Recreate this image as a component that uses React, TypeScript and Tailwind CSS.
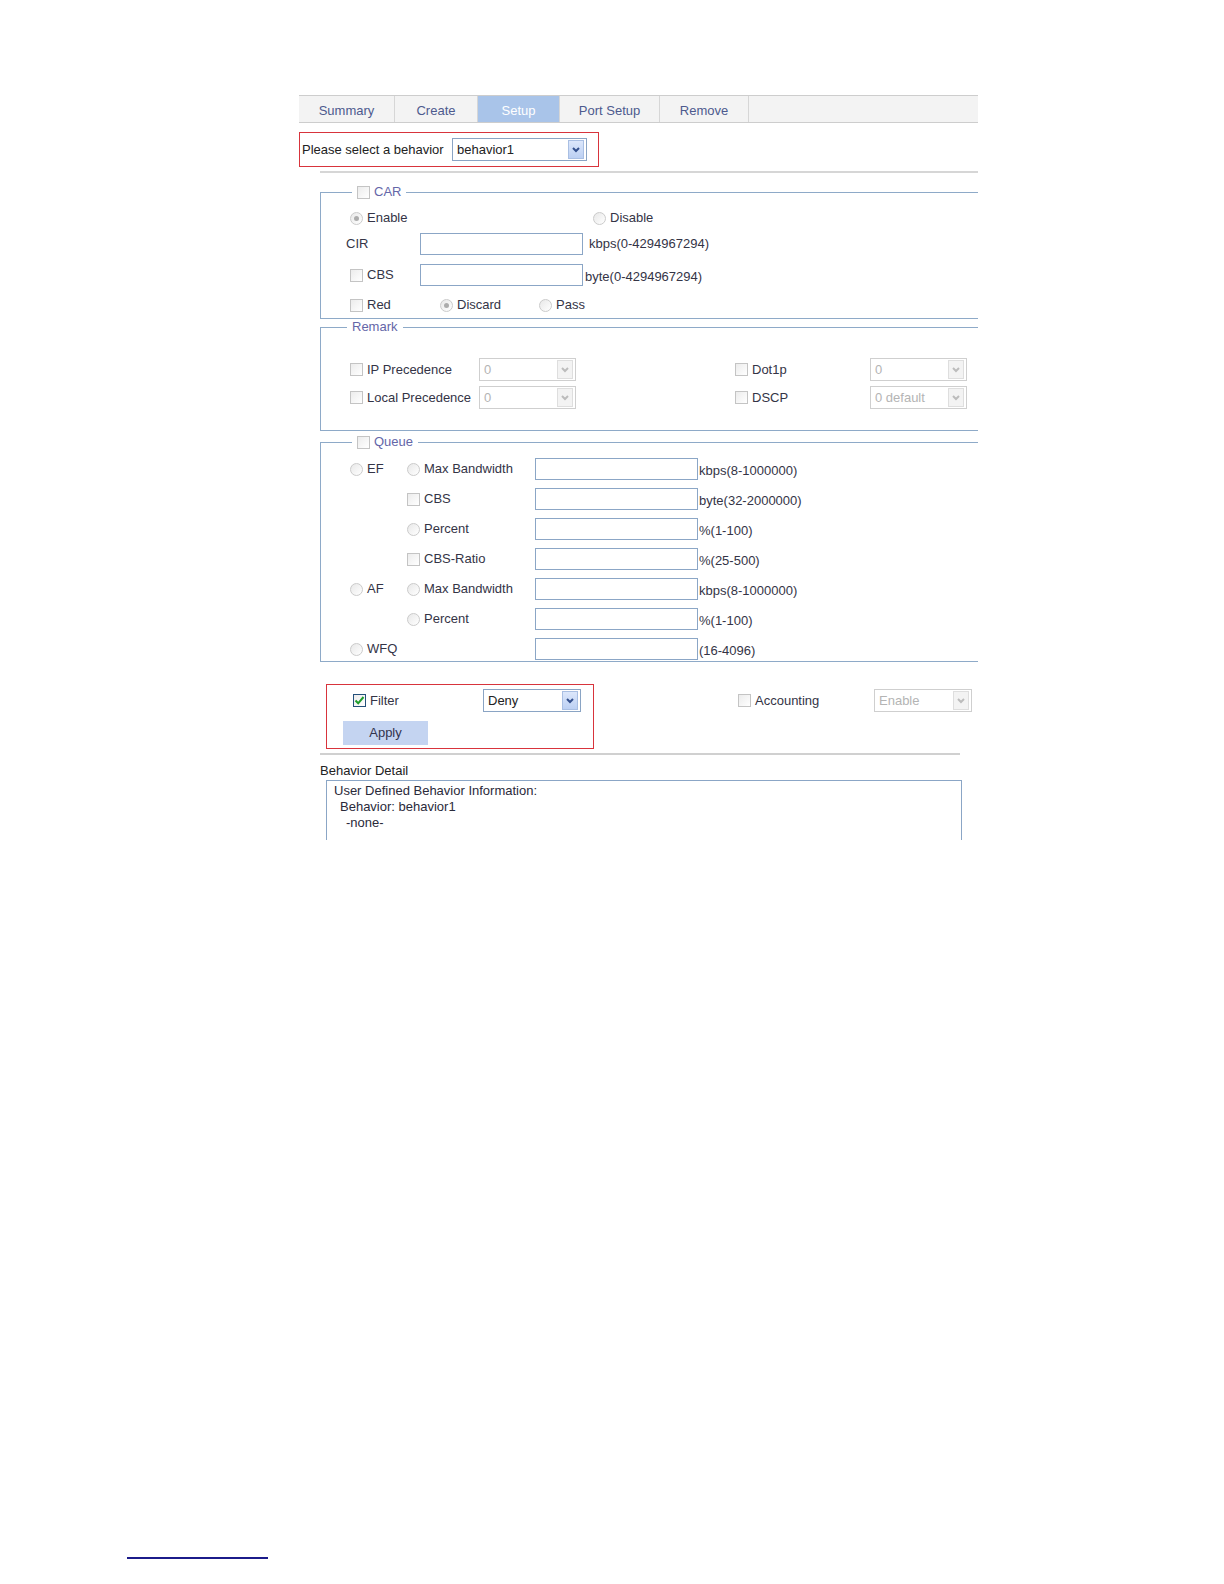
import React from 'react';

function Check({ checked = false }: { checked?: boolean }) {
  return (
    <span
      className={`inline-flex h-[13px] w-[13px] shrink-0 items-center justify-center border bg-gradient-to-br from-[#ececec] to-white ${
        checked ? 'border-[#24507a]' : 'border-[#c4c4c4]'
      }`}
    >
      {checked && (
        <svg width="11" height="11" viewBox="0 0 11 11">
          <path d="M1.5 5.5 L4.2 8.3 L9.5 2" fill="none" stroke="#1f9d2b" strokeWidth="2" />
        </svg>
      )}
    </span>
  );
}

function Radio({ checked = false }: { checked?: boolean }) {
  return (
    <span className="inline-flex h-[13px] w-[13px] shrink-0 items-center justify-center rounded-full border border-[#cbcbcb] bg-gradient-to-br from-[#e8e8e8] to-white">
      {checked && <span className="h-[5px] w-[5px] rounded-full bg-[#acacac]" />}
    </span>
  );
}

function Chevron({ color }: { color: string }) {
  return (
    <svg width="8" height="6" viewBox="0 0 8 6">
      <path d="M1 1 L4 4 L7 1" fill="none" stroke={color} strokeWidth="2" />
    </svg>
  );
}

function Select({ value, className, disabled = false }: { value: string; className: string; disabled?: boolean }) {
  return (
    <div
      className={`flex h-[23px] shrink-0 items-center justify-between border bg-white pl-[4px] pr-[2px] ${
        disabled ? 'border-[#cfcfcf] text-[#b4b4b4]' : 'border-[#8aa4c4] text-[#222]'
      } ${className}`}
    >
      <span className="leading-[16px]">{value}</span>
      {disabled ? (
        <span className="flex h-[19px] w-[16px] items-center justify-center border border-[#dedede] bg-[#f3f3f3]">
          <Chevron color="#bcbcbc" />
        </span>
      ) : (
        <span className="flex h-[19px] w-[16px] items-center justify-center border border-[#a9bfe3] bg-gradient-to-b from-[#dce7fb] to-[#bcd0f3]">
          <Chevron color="#34508e" />
        </span>
      )}
    </div>
  );
}

function Field() {
  return <div className="h-[22px] w-[163px] shrink-0 border border-[#8ba6c6] bg-white" />;
}

function Legend({ children, className }: { children: React.ReactNode; className: string }) {
  return (
    <legend className={`px-[5px] ${className}`}>
      <span className="flex h-[16px] items-center gap-[4px] text-[#6466a8]">{children}</span>
    </legend>
  );
}

const queueRows: { c1?: string; c2: string; radio: boolean; suffix: string }[] = [
  { c1: 'EF', c2: 'Max Bandwidth', radio: true, suffix: 'kbps(8-1000000)' },
  { c2: 'CBS', radio: false, suffix: 'byte(32-2000000)' },
  { c2: 'Percent', radio: true, suffix: '%(1-100)' },
  { c2: 'CBS-Ratio', radio: false, suffix: '%(25-500)' },
  { c1: 'AF', c2: 'Max Bandwidth', radio: true, suffix: 'kbps(8-1000000)' },
  { c2: 'Percent', radio: true, suffix: '%(1-100)' },
];

export default function App() {
  return (
    <div className="flex h-[1584px] w-[1224px] flex-col bg-white font-['Liberation_Sans',Arial,sans-serif] text-[13px] leading-[16px] text-[#343446]">
      <div className="ml-[299px] mt-[95px] w-[679px] overflow-hidden">
        {/* Tabs */}
        <div className="flex h-[28px] border-b border-t border-[#cdcdcd] bg-[#f3f3f3] text-[#4d5a8e]">
          <div className="flex w-[96px] items-center justify-center border-r border-[#d6d6d6] pt-[3px]">Summary</div>
          <div className="flex w-[83px] items-center justify-center border-r border-[#d6d6d6] pt-[3px]">Create</div>
          <div className="flex w-[82px] items-center justify-center border-r border-[#d6d6d6] bg-[#a9c4e9] pt-[3px] text-white">Setup</div>
          <div className="flex w-[100px] items-center justify-center border-r border-[#d6d6d6] pt-[3px]">Port Setup</div>
          <div className="flex w-[89px] items-center justify-center border-r border-[#d6d6d6] pt-[3px]">Remove</div>
        </div>

        {/* Behavior selection */}
        <div className="mt-[9px] flex h-[35px] w-[300px] items-center border border-[#d8343c] pl-[2px]">
          <span className="w-[150px] text-[#222]">Please select a behavior</span>
          <Select value="behavior1" className="w-[135px]" />
        </div>

        <div className="ml-[21px] mt-[4px] h-[2px] bg-[#d6d6d6]" />

        {/* CAR */}
        <fieldset className="ml-[21px] mt-[11px] w-[720px] border border-[#8eaac8]">
          <Legend className="ml-[31px]">
            <Check />
            <span>CAR</span>
          </Legend>
          <div className="pb-[3px] pt-[7px]">
            <div className="flex h-[22px] items-center pl-[29px]">
              <span className="flex w-[243px] items-center gap-[4px]">
                <Radio checked />
                Enable
              </span>
              <span className="flex items-center gap-[4px]">
                <Radio />
                Disable
              </span>
            </div>
            <div className="mt-[4px] flex h-[22px] items-center pl-[25px]">
              <span className="w-[74px]">CIR</span>
              <Field />
              <span className="ml-[6px]">kbps(0-4294967294)</span>
            </div>
            <div className="mt-[9px] flex h-[22px] items-center pl-[29px]">
              <span className="flex w-[70px] items-center gap-[4px]">
                <Check />
                CBS
              </span>
              <Field />
              <span className="ml-[2px] pt-[3px]">byte(0-4294967294)</span>
            </div>
            <div className="mt-[9px] flex h-[20px] items-center pl-[29px]">
              <span className="flex w-[90px] items-center gap-[4px]">
                <Check />
                Red
              </span>
              <span className="flex w-[99px] items-center gap-[4px]">
                <Radio checked />
                Discard
              </span>
              <span className="flex items-center gap-[4px]">
                <Radio />
                Pass
              </span>
            </div>
          </div>
        </fieldset>

        {/* Remark */}
        <fieldset className="ml-[21px] w-[720px] border border-[#8eaac8]">
          <Legend className="ml-[26px]">
            <span>Remark</span>
          </Legend>
          <div className="pb-[21px] pt-[23px]">
            <div className="flex h-[23px] items-center pl-[29px]">
              <span className="flex w-[129px] items-center gap-[4px]">
                <Check />
                IP Precedence
              </span>
              <Select value="0" className="w-[97px]" disabled />
              <span className="ml-[159px] flex w-[135px] items-center gap-[4px]">
                <Check />
                Dot1p
              </span>
              <Select value="0" className="w-[97px]" disabled />
            </div>
            <div className="mt-[5px] flex h-[23px] items-center pl-[29px]">
              <span className="flex w-[129px] items-center gap-[4px]">
                <Check />
                Local Precedence
              </span>
              <Select value="0" className="w-[97px]" disabled />
              <span className="ml-[159px] flex w-[135px] items-center gap-[4px]">
                <Check />
                DSCP
              </span>
              <Select value="0 default" className="w-[97px]" disabled />
            </div>
          </div>
        </fieldset>

        {/* Queue */}
        <fieldset className="ml-[21px] mt-[3px] w-[720px] border border-[#8eaac8]">
          <Legend className="ml-[31px]">
            <Check />
            <span>Queue</span>
          </Legend>
          <div className="flex flex-col gap-[8px] pb-[1px] pt-[8px]">
            {queueRows.map((r, i) => (
              <div key={i} className="flex h-[22px] items-center pl-[29px]">
                <span className="flex w-[57px] items-center gap-[4px]">
                  {r.c1 && (
                    <>
                      <Radio />
                      {r.c1}
                    </>
                  )}
                </span>
                <span className="flex w-[128px] items-center gap-[4px]">
                  {r.radio ? <Radio /> : <Check />}
                  {r.c2}
                </span>
                <Field />
                <span className="ml-[1px] pt-[3px]">{r.suffix}</span>
              </div>
            ))}
            <div className="flex h-[22px] items-center pl-[29px]">
              <span className="flex w-[185px] items-center gap-[4px]">
                <Radio />
                WFQ
              </span>
              <Field />
              <span className="ml-[1px] pt-[3px]">(16-4096)</span>
            </div>
          </div>
        </fieldset>

        {/* Filter / Accounting */}
        <div className="mt-[22px] flex">
          <div className="ml-[27px] h-[65px] w-[268px] border border-[#d8343c] pl-[16px] pt-[4px]">
            <div className="flex h-[23px] items-center pl-[10px]">
              <span className="flex w-[130px] items-center gap-[4px]">
                <Check checked />
                Filter
              </span>
              <Select value="Deny" className="w-[98px]" />
            </div>
            <button className="mt-[9px] flex h-[24px] w-[85px] items-center justify-center bg-[#c4d4f1] text-[#33334d]">
              Apply
            </button>
          </div>
          <div className="ml-[144px] mt-[5px] flex h-[23px] items-center">
            <span className="flex w-[136px] items-center gap-[4px]">
              <Check />
              Accounting
            </span>
            <Select value="Enable" className="w-[98px]" disabled />
          </div>
        </div>

        <div className="ml-[21px] mt-[4px] h-[2px] w-[640px] bg-[#d0d0d0]" />

        {/* Behavior detail */}
        <div className="ml-[21px] mt-[8px] text-[#222]">Behavior Detail</div>
        <div className="ml-[27px] mt-[1px] h-[60px] w-[636px] border-x border-t border-[#8ba6c6] pl-[7px] pt-[2px] text-[#2a2a3a]">
          <div>User Defined Behavior Information:</div>
          <div className="pl-[6px]">Behavior: behavior1</div>
          <div className="pl-[12px]">-none-</div>
        </div>
      </div>

      <div className="mb-[25px] ml-[127px] mt-auto h-[2px] w-[141px] bg-[#1b1b8a]" />
    </div>
  );
}
